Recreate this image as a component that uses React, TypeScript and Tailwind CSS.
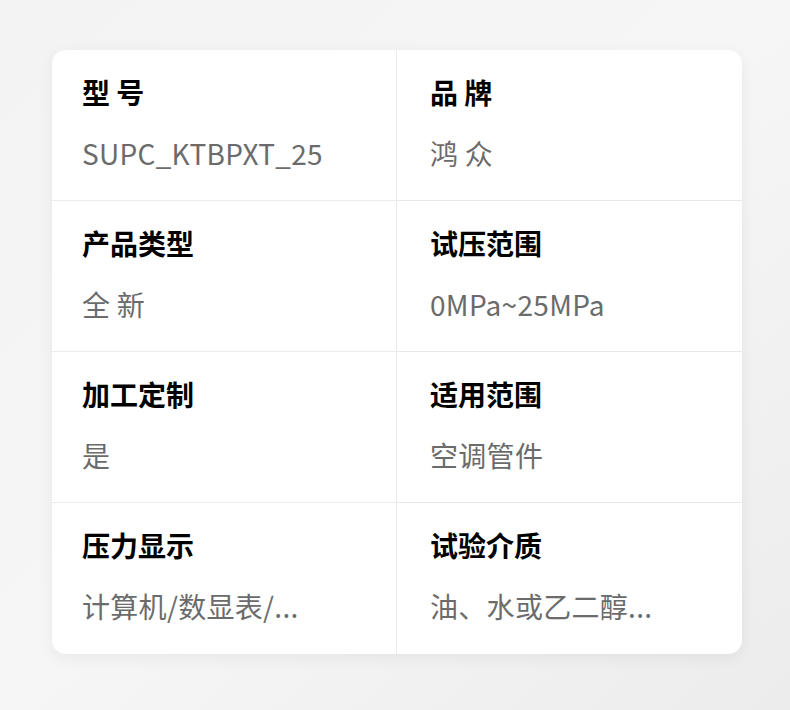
const specs = [
  { label: '型 号', value: 'SUPC_KTBPXT_25' },
  { label: '品 牌', value: '鸿 众' },
  { label: '产品类型', value: '全 新' },
  { label: '试压范围', value: '0MPa~25MPa' },
  { label: '加工定制', value: '是' },
  { label: '适用范围', value: '空调管件' },
  { label: '压力显示', value: '计算机/数显表/...' },
  { label: '试验介质', value: '油、水或乙二醇...' },
];

export default function App() {
  return (
    <div
      className="w-[790px] h-[710px] bg-gradient-to-br from-[#f3f3f3] via-[#f6f6f6] to-[#ececec] pt-[50px] pl-[52px]"
      style={{ fontFamily: '"Noto Sans CJK SC", "Noto Sans", sans-serif' }}
    >
      <div className="w-[690px] rounded-[14px] bg-white shadow-[0_4px_16px_rgba(0,0,0,0.06)] grid grid-cols-2 overflow-hidden">
        {specs.map((s, i) => {
          const right = i % 2 === 1;
          const lastRow = i >= 6;
          return (
            <div
              key={s.label}
              className={`h-[151px] flex flex-col pt-[21px] ${
                right ? 'pl-[33px]' : 'pl-[30px] border-r border-[#ebebeb]'
              } ${lastRow ? '' : 'border-b border-[#e8e8e8]'}`}
            >
              <div className="text-[28px] leading-[42px] font-bold text-black">
                {s.label}
              </div>
              <div className="mt-[19px] text-[28px] leading-[42px] tracking-[0.3px] text-[#6b6b6b]">
                {s.value}
              </div>
            </div>
          );
        })}
      </div>
    </div>
  );
}
